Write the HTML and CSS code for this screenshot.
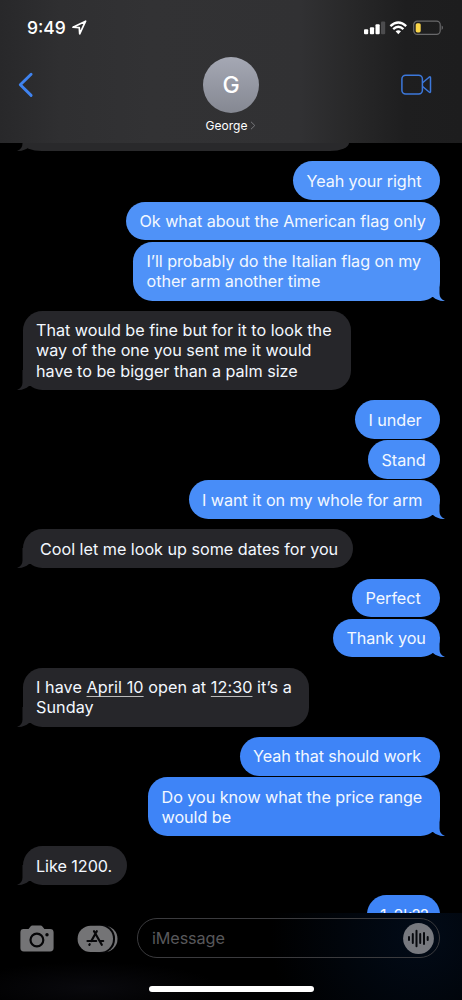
FILE: index.html
```html
<!DOCTYPE html>
<html lang="en">
<head>
<meta charset="utf-8">
<meta name="viewport" content="width=device-width, initial-scale=1">
<title>George</title>
<link rel="stylesheet" href="styles.css">
</head>
<body>
<div class="phone">
  <header class="top">
    <div class="status">
      <span class="time">9:49</span>
      <svg class="loc" width="15" height="15" viewBox="0 0 15 15"><path d="M1 7.2 13.6 1.2 7.7 13.8 7.3 7.7Z" fill="none" stroke="#fff" stroke-width="1.7" stroke-linejoin="round"/></svg>
      <svg class="signal" width="22" height="14" viewBox="0 0 22 14"><g fill="#fff"><rect x="0" y="8.2" width="4.2" height="5.1" rx="1"/><rect x="5.9" y="6.3" width="4.2" height="7" rx="1"/><rect x="11.5" y="3.3" width="4.2" height="10" rx="1"/></g><rect x="17" y=".6" width="4.2" height="12.7" rx="1" fill="#4c4c4e"/></svg>
      <svg class="wifi" width="19" height="14" viewBox="0 0 19 14"><g fill="none" stroke="#fff" stroke-width="2.3"><path d="M1.4 5.1Q9.3-2.2 17.2 5.1"/><path d="M4.2 8.1Q9.3 3.3 14.4 8.1"/></g><path d="M6.6 10.3Q9.3 8.1 12 10.3L9.3 13.2Z" fill="#fff"/></svg>
      <svg class="battery" width="31" height="16" viewBox="0 0 31 16"><rect x=".7" y="1.2" width="26.5" height="13.2" rx="3.6" fill="none" stroke="#69696b" stroke-width="1.2"/><path d="M28.6 5.5v4.4Q30 9.3 30 7.7T28.6 5.5Z" fill="#69696b"/><rect x="2.7" y="3.2" width="5" height="9.2" rx="1.6" fill="#fbd64a"/></svg>
    </div>
    <div class="nav">
      <svg class="back" width="16" height="26" viewBox="0 0 16 26"><path d="M13.1 2.2 2.3 12.8 13.1 23.4" fill="none" stroke="#3f83f0" stroke-width="2.9" stroke-linecap="round" stroke-linejoin="round"/></svg>
      <div class="contact">
        <div class="avatar">G</div>
        <div class="name">George<svg width="6" height="9" viewBox="0 0 6 9"><path d="M1 .8 4.8 4.5 1 8.2" fill="none" stroke="#77777b" stroke-width="1"/></svg></div>
      </div>
      <svg class="video" width="31" height="22" viewBox="0 0 31 22"><g fill="none" stroke="#3c78dc" stroke-width="1.5" stroke-linejoin="round"><rect x=".9" y="1.2" width="20.5" height="18.8" rx="3.8"/><path d="M21.6 8.7 28.1 3.2Q29.5 2.2 29.5 3.8V17.4Q29.5 19 28.1 18L21.6 12.5"/></g></svg>
    </div>
  </header>
  <main class="chat">
    <div class="stub"><svg class="tail" viewBox="0 0 16 20"><path d="M5.5 0V12.5Q5.5 18 0 20Q7 20.3 12 16L16 16V0Z"/></svg></div>
    <div class="group sent">
      <div class="bubble w1"><p>Yeah your right</p></div>
      <div class="bubble w2"><p>Ok what about the American flag only</p></div>
      <div class="bubble w3"><p>I’ll probably do the Italian flag on my<br>other arm another time</p><svg class="tail" viewBox="0 0 16 20"><path d="M5.5 0V12.5Q5.5 18 0 20Q7 20.3 12 16L16 16V0Z"/></svg></div>
    </div>
    <div class="group got">
      <div class="bubble w4"><p>That would be fine but for it to look the<br>way of the one you sent me it would<br>have to be bigger than a palm size</p><svg class="tail" viewBox="0 0 16 20"><path d="M5.5 0V12.5Q5.5 18 0 20Q7 20.3 12 16L16 16V0Z"/></svg></div>
    </div>
    <div class="group sent mid">
      <div class="bubble w5"><p>I under</p></div>
      <div class="bubble w6"><p>Stand</p></div>
      <div class="bubble w7"><p>I want it on my whole for arm</p><svg class="tail" viewBox="0 0 16 20"><path d="M5.5 0V12.5Q5.5 18 0 20Q7 20.3 12 16L16 16V0Z"/></svg></div>
    </div>
    <div class="group got">
      <div class="bubble w8"><p>Cool let me look up some dates for you</p><svg class="tail" viewBox="0 0 16 20"><path d="M5.5 0V12.5Q5.5 18 0 20Q7 20.3 12 16L16 16V0Z"/></svg></div>
    </div>
    <div class="group sent low">
      <div class="bubble w9"><p>Perfect</p></div>
      <div class="bubble w10"><p>Thank you</p><svg class="tail" viewBox="0 0 16 20"><path d="M5.5 0V12.5Q5.5 18 0 20Q7 20.3 12 16L16 16V0Z"/></svg></div>
    </div>
    <div class="group got">
      <div class="bubble w11"><p>I have <u>April 10</u> open at <u>12:30</u> it’s a<br>Sunday</p><svg class="tail" viewBox="0 0 16 20"><path d="M5.5 0V12.5Q5.5 18 0 20Q7 20.3 12 16L16 16V0Z"/></svg></div>
    </div>
    <div class="group sent last">
      <div class="bubble w12"><p>Yeah that should work</p></div>
      <div class="bubble w13"><p>Do you know what the price range<br>would be</p><svg class="tail" viewBox="0 0 16 20"><path d="M5.5 0V12.5Q5.5 18 0 20Q7 20.3 12 16L16 16V0Z"/></svg></div>
    </div>
    <div class="group got">
      <div class="bubble w14"><p>Like 1200.</p><svg class="tail" viewBox="0 0 16 20"><path d="M5.5 0V12.5Q5.5 18 0 20Q7 20.3 12 16L16 16V0Z"/></svg></div>
    </div>
    <div class="group sent last">
      <div class="bubble w15"><p>1-2k??</p></div>
    </div>
  </main>
  <footer class="composer">
    <div class="tools">
      <svg class="camera" width="34" height="27" viewBox="0 0 34 27"><path d="M3.5 4H8.5L10.5 1.6Q11.2.6 12.4.6H20.5Q21.7.6 22.4 1.6L24.4 4H30Q33.6 4 33.6 7.4V23Q33.6 26.4 30 26.4H3.8Q.4 26.4.4 23V7.4Q.4 4 3.5 4Z" fill="#747476"/><circle cx="16.9" cy="15" r="6.4" fill="none" stroke="#050507" stroke-width="2.2"/><circle cx="27" cy="9.8" r="1.7" fill="#050507"/></svg>
      <svg class="apps" width="42" height="28" viewBox="0 0 42 28"><rect x="14" y=".7" width="26.5" height="26.3" rx="13.1" fill="#747476"/><rect x="10" y="-.6" width="28" height="29" rx="14" fill="#050507"/><rect x=".6" y=".7" width="35.4" height="26.3" rx="13.1" fill="#747476"/><g stroke="#08080a" stroke-width="2.2" stroke-linecap="round" fill="none"><path d="M17 6.2 24.8 19.8M19.8 6.2 14.3 16M10.5 16H19.2M23.4 16H26.2M12.7 19.2 12.3 19.9"/></g></svg>
      <div class="field"><span>iMessage</span>
        <svg class="wave" width="31" height="31" viewBox="0 0 31 31"><circle cx="15.5" cy="15.5" r="15.4" fill="#77797f"/><path d="M6 14v3M9.8 11v9M13.5 7.8v15.4M17.2 11v9M21 10v11M24.7 14v3" stroke="#080a0f" stroke-width="2" stroke-linecap="round"/></svg>
      </div>
    </div>
    <div class="home"></div>
  </footer>
</div>
</body>
</html>
```
FILE: styles.css
```css
* { box-sizing: border-box; }
body { margin: 0; background: #000; }
.phone {
  width: 462px; height: 1000px; overflow: hidden; background: #000;
  display: flex; flex-direction: column;
  font-family: Inter, "Liberation Sans", sans-serif; color: #fff;
}
svg { display: block; flex: none; }

/* Header */
.top {
  flex: none; height: 143px;
  background: linear-gradient(90deg, #28282a 0, #2f2f31 60px, #323234 150px, #313133 300px, #272728 355px, #1e1e1f 405px, #1d1d1e 100%);
}
.status { display: flex; height: 45px; padding: 12px 18px 0 27px; }
.time { font-size: 17.5px; font-weight: 500; line-height: 32px; width: 45px; }
.loc { margin-top: 8px; }
.signal { margin: 9px 0 0 auto; }
.wifi { margin: 9px 0 0 3px; }
.battery { margin: 8px 0 0 5px; }
.nav { display: grid; grid-template-columns: 1fr 80px 1fr; padding: 0 30px 0 18px; }
.back { margin-top: 27px; }
.video { margin-top: 29px; justify-self: end; }
.contact { display: flex; flex-direction: column; align-items: center; padding-top: 12px; transform: translateX(6px); }
.avatar {
  width: 56px; height: 56px; border-radius: 50%;
  background: linear-gradient(#a5a8b4, #858892);
  font-size: 23px; font-weight: 500; line-height: 57px; text-align: center;
}
.name { display: flex; align-items: center; gap: 3px; margin-top: 4px; font-size: 12px; line-height: 17px; white-space: nowrap; }

/* Conversation */
.chat {
  flex: none; height: 770px; overflow: hidden; padding: 0 22.5px;
  display: flex; flex-direction: column; gap: 10.35px;
}
.stub {
  --fill: #29292b; position: relative; flex: none;
  width: 326px; height: 8px; background: var(--fill); border-radius: 0 0 19px 19px / 0 0 8px 8px;
}
.group { --fill: #26262a; flex: none; display: flex; flex-direction: column; gap: 1.5px; align-items: flex-start; }
.sent { --fill: #4f92f8; align-items: flex-end; }
.mid { --fill: #488df8; }
.low { --fill: #4388f8; }
.last { --fill: #3e84f7; }
.bubble {
  position: relative; background: var(--fill); border-radius: 19.4px;
  padding: 9.5px 13.5px 9.1px; font-size: 16.2px; line-height: 20.1px; letter-spacing: -.05px;
}
.bubble p { margin: 0; white-space: nowrap; color: #f3f8ff; }
.bubble u { text-decoration-thickness: 1px; text-underline-offset: 3px; text-decoration-color: #bbb; }
.tail { position: absolute; left: -5.5px; bottom: 0; width: 16px; height: 20px; fill: var(--fill); }
.sent .tail { left: auto; right: -5.5px; transform: scaleX(-1); }
.w1 { width: 146.5px; }
.w2 { width: 313.5px; }
.w3 { width: 306.5px; }
.w4 { width: 328px; letter-spacing: -.02px; }
.w5 { width: 84.5px; }
.w6 { width: 71.5px; }
.w7 { width: 251px; }
.w8 { width: 330.5px; letter-spacing: -.02px; }
.w8 p { padding-left: 4px; }
.w9 { width: 87.5px; }
.w10 { width: 106.5px; }
.w11 { width: 286.5px; letter-spacing: .06px; }
.w12 { width: 200px; }
.w13 { width: 291.5px; }
.w14 { width: 104px; }
.w15 { width: 73px; }
.w1, .w10, .w12 { letter-spacing: -.1px; }

/* Message composer */
.composer {
  flex: 1; background: radial-gradient(circle at 420px 20px, #020b18, transparent 150px), radial-gradient(ellipse at 90px 75px, #09090d, transparent 130px), #000;
}
.tools { display: flex; padding: 5px 22.5px 0 20px; height: 73px; }
.camera { margin-top: 7px; }
.apps { margin: 7px 0 0 23px; }
.field {
  flex: 1; margin-left: 18px; height: 40px; border: 1.3px solid #3b3b3e; border-radius: 20px;
  display: flex; align-items: center; justify-content: space-between; padding: 0 5px 0 14px;
  font-size: 16.2px; letter-spacing: -.1px; color: #58585b;
}
.home { width: 165px; height: 5.5px; margin: 0 auto; border-radius: 3px; background: #fff; }
```
